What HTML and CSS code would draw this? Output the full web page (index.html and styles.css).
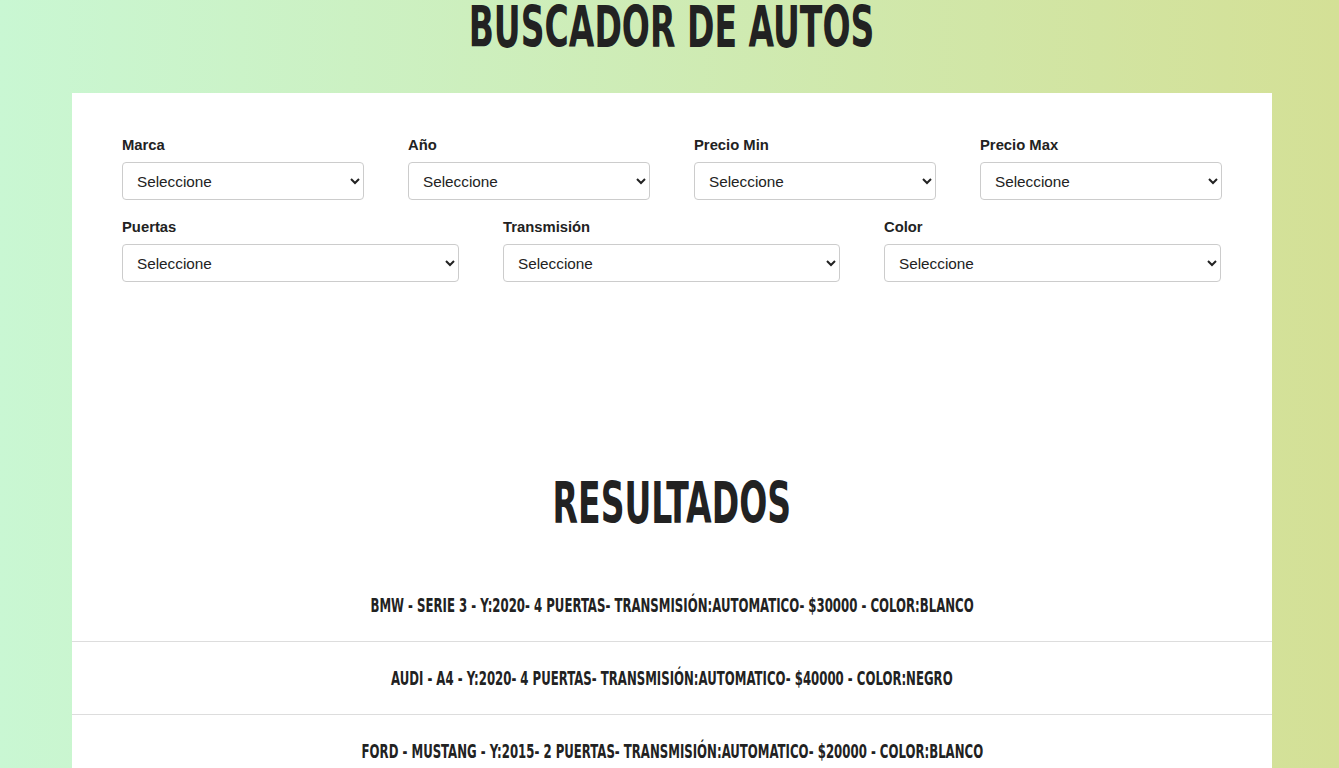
FILE: index.html
```html
<!DOCTYPE html>
<html lang="es">
<head>
<meta charset="utf-8">
<title>Buscador de Autos</title>
<link rel="stylesheet" href="styles.css">
</head>
<body>
<header class="header">
  <h1 class="title"><span class="squeeze-title">Buscador de Autos</span></h1>
</header>
<main class="container">
  <form class="filters">
    <div class="row row-4">
      <div class="field">
        <label class="label" for="marca">Marca</label>
        <select class="select" id="marca"><option>Seleccione</option></select>
      </div>
      <div class="field">
        <label class="label" for="year">Año</label>
        <select class="select" id="year"><option>Seleccione</option></select>
      </div>
      <div class="field">
        <label class="label" for="minimo">Precio Min</label>
        <select class="select" id="minimo"><option>Seleccione</option></select>
      </div>
      <div class="field">
        <label class="label" for="maximo">Precio Max</label>
        <select class="select" id="maximo"><option>Seleccione</option></select>
      </div>
    </div>
    <div class="row row-3">
      <div class="field">
        <label class="label" for="puertas">Puertas</label>
        <select class="select" id="puertas"><option>Seleccione</option></select>
      </div>
      <div class="field">
        <label class="label" for="transmision">Transmisión</label>
        <select class="select" id="transmision"><option>Seleccione</option></select>
      </div>
      <div class="field">
        <label class="label" for="color">Color</label>
        <select class="select" id="color"><option>Seleccione</option></select>
      </div>
    </div>
  </form>
  <h2 class="results-title"><span class="squeeze-title">Resultados</span></h2>
  <ul class="results">
    <li class="result"><span class="squeeze-item">BMW - Serie 3 - Y:2020- 4 Puertas- Transmisión:automatico- $30000 - Color:Blanco</span></li>
    <li class="result"><span class="squeeze-item">Audi - A4 - Y:2020- 4 Puertas- Transmisión:automatico- $40000 - Color:Negro</span></li>
    <li class="result"><span class="squeeze-item">Ford - Mustang - Y:2015- 2 Puertas- Transmisión:automatico- $20000 - Color:Blanco</span></li>
  </ul>
</main>
</body>
</html>
```
FILE: styles.css
```css
html {
  height: 100%;
}
body {
  margin: 0;
  padding-left: 5px;
  min-height: 100%;
  background: linear-gradient(to right, #c9f7d3 0%, #d4e096 100%);
  background-attachment: fixed;
  font-family: "Liberation Sans", Arial, sans-serif;
  color: #222;
}
.header {
  height: 93px;
  text-align: center;
}
.title {
  margin: 0;
  font-family: "DejaVu Sans Condensed", "DejaVu Sans", sans-serif;
  font-weight: 700;
  font-size: 57px;
  line-height: 54px;
  text-transform: uppercase;
  color: #222;
}
.squeeze-title {
  display: inline-block;
  transform: scaleX(0.645);
}
.squeeze-item {
  display: inline-block;
  transform: scaleX(0.687);
}
.container {
  width: 1200px;
  margin: 0 auto;
  background: #fff;
}
.filters {
  box-sizing: border-box;
  padding: 43px 50px 0;
  height: 240px;
}
.row {
  display: grid;
  column-gap: 44px;
  margin-bottom: 18px;
}
.row-4 {
  grid-template-columns: repeat(4, 242px);
}
.row-3 {
  grid-template-columns: repeat(3, 337px);
}
.field {
  display: flex;
  flex-direction: column;
}
.label {
  font-weight: 700;
  font-size: 14.8px;
  line-height: 18px;
  margin-bottom: 8px;
  color: #222;
}
.select {
  height: 38px;
  border: 1px solid #ccc;
  border-radius: 4px;
  background: #fff;
  padding: 0 10px 0 10px;
  font-family: "Liberation Sans", Arial, sans-serif;
  font-size: 15.3px;
  color: #222;
}
.results-title {
  margin: 0;
  padding-top: 144px;
  text-align: center;
  font-family: "DejaVu Sans Condensed", "DejaVu Sans", sans-serif;
  font-weight: 700;
  font-size: 57px;
  line-height: 52px;
  text-transform: uppercase;
  color: #222;
}
.results {
  list-style: none;
  margin: 0;
  padding: 40px 0 0;
}
.result {
  height: 72px;
  display: flex;
  align-items: center;
  justify-content: center;
  border-bottom: 1px solid #ddd;
  font-family: "DejaVu Sans Condensed", "DejaVu Sans", sans-serif;
  font-weight: 700;
  font-size: 19px;
  text-transform: uppercase;
  color: #222;
  white-space: nowrap;
}
```
